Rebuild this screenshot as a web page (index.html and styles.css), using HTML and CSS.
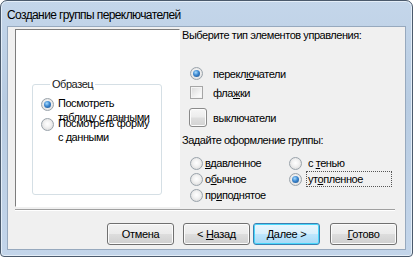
FILE: index.html
```html
<!DOCTYPE html>
<html lang="ru">
<head>
<meta charset="utf-8">
<title>Создание группы переключателей</title>
<link rel="stylesheet" href="styles.css">
</head>
<body>
<div class="window">
  <div class="titlebar">Создание группы переключателей</div>
  <div class="client">
    <div class="main">
      <div class="preview">
        <fieldset class="sample">
          <legend>Образец</legend>
          <div class="opt-multi"><span class="radio checked"></span><span class="ml">Посмотреть<br>таблицу с данными</span></div>
          <div class="opt-multi"><span class="radio"></span><span class="ml">Посмотреть форму<br>с данными</span></div>
        </fieldset>
      </div>
      <div class="options">
        <div class="heading">Выберите тип элементов управления:</div>
        <div class="type-row r1"><span class="radio checked"></span><span class="tlabel">перекл<u>ю</u>чатели</span></div>
        <div class="type-row r2"><span class="check"></span><span class="tlabel">фла<u>ж</u>ки</span></div>
        <div class="type-row r3"><span class="toggle"></span><span class="tlabel t3">выключатели</span></div>
        <div class="heading h2">Задайте оформление группы:</div>
        <div class="style-grid">
          <div class="srow"><span class="radio"></span><span class="slabel"><u>в</u>давленное</span></div>
          <div class="srow col2"><span class="radio"></span><span class="slabel box">с <u>т</u>енью</span></div>
          <div class="srow"><span class="radio"></span><span class="slabel">о<u>б</u>ычное</span></div>
          <div class="srow col2"><span class="radio checked"></span><span class="slabel box focus">ут<u>о</u>пленное</span></div>
          <div class="srow"><span class="radio"></span><span class="slabel">пр<u>и</u>поднятое</span></div>
        </div>
      </div>
    </div>
    <div class="separator"></div>
    <div class="buttons">
      <button class="btn b-cancel">Отмена</button>
      <button class="btn b-back">&lt; <u>Н</u>азад</button>
      <button class="btn b-next default"><u>Д</u>алее &gt;</button>
      <button class="btn b-done"><u>Г</u>отово</button>
    </div>
  </div>
</div>
</body>
</html>
```
FILE: styles.css
```css
html, body {
  margin: 0;
  padding: 0;
  background: #ffffff;
}
body {
  width: 413px;
  height: 257px;
  overflow: hidden;
  font-family: "Liberation Sans", Arial, sans-serif;
  font-size: 11px;
  letter-spacing: -0.45px;
  color: #000;
}
.window {
  box-sizing: border-box;
  width: 413px;
  height: 257px;
  border: 1px solid #4b5a6c;
  border-radius: 7px 7px 4px 4px;
  padding: 0 6px 6px 6px;
  background: linear-gradient(180deg, #c4d6ea 0%, #b8cce2 40%, #c3d5ea 100%);
  box-shadow: inset 0 0 0 1px #e4eef8;
}
.titlebar {
  height: 25px;
  line-height: 29px;
  font-family: "Liberation Sans", Arial, sans-serif;
  font-size: 12px;
  letter-spacing: -0.6px;
  color: #000;
  white-space: nowrap;
}
.client {
  box-sizing: border-box;
  width: 399px;
  height: 224px;
  border: 1px solid #97a9be;
  background: #f0f0f0;
}
.main {
  display: flex;
  padding: 2px 0 0 7px;
  height: 180px;
  box-sizing: border-box;
}
.preview {
  box-sizing: border-box;
  width: 165px;
  height: 178px;
  background: #ffffff;
  border-top: 1px solid #7d7d7d;
  border-left: 1px solid #7d7d7d;
  border-right: 1px solid #ffffff;
  border-bottom: 1px solid #ffffff;
  padding: 47px 0 0 16px;
}
.sample {
  box-sizing: border-box;
  width: 130px;
  height: 118px;
  margin: 0;
  padding: 5px 0 0 8px;
  border: 1px solid #d5dfe5;
  border-radius: 3px;
}
.sample legend {
  margin-left: 9px;
  padding: 0 2px;
  line-height: 14px;
  color: #1a1a1a;
}
.opt-multi {
  display: flex;
  align-items: flex-start;
  height: 20px;
}
.opt-multi .radio {
  margin-top: 2px;
}
.ml {
  margin-left: 4px;
  line-height: 14px;
  white-space: nowrap;
}
.radio {
  position: relative;
  flex: none;
  box-sizing: border-box;
  width: 13px;
  height: 13px;
  border-radius: 50%;
  border: 1px solid #9aa3ab;
  background: radial-gradient(circle at 50% 45%, #ffffff 0%, #f2f2f2 40%, #d2d2d2 100%);
}
.radio.checked::after {
  content: "";
  position: absolute;
  left: 2px;
  top: 2px;
  width: 7px;
  height: 7px;
  border-radius: 50%;
  background: radial-gradient(circle at 40% 35%, #a6dcff 0%, #3b86cf 45%, #1a4a82 100%);
}
.options {
  margin-left: 2px;
  flex: 1;
}
.heading {
  line-height: 13px;
  height: 13px;
  white-space: nowrap;
}
.type-row {
  display: flex;
  align-items: center;
  height: 19px;
  padding-left: 8px;
}
.r1 {
  margin-top: 22px;
}
.r3 {
  margin-top: 6px;
}
.tlabel {
  margin-left: 10px;
  white-space: nowrap;
}
.t3 {
  margin-left: 6px;
}
.check {
  flex: none;
  box-sizing: border-box;
  width: 13px;
  height: 13px;
  border: 1px solid #a6a6a6;
  background: linear-gradient(135deg, #d9d9d9 0%, #f6f6f6 70%, #ffffff 100%);
  box-shadow: inset 0 0 0 1px #f4f4f4;
}
.toggle {
  flex: none;
  box-sizing: border-box;
  width: 18px;
  height: 19px;
  margin-left: -1px;
  border: 1px solid #8a8a8a;
  border-radius: 3px;
  background: linear-gradient(180deg, #f6f6f6 0%, #ececec 48%, #dedede 52%, #d2d2d2 100%);
  box-shadow: inset 0 0 0 1px #fcfcfc;
}
.h2 {
  margin-top: 7px;
}
.style-grid {
  display: grid;
  grid-template-columns: 99px auto;
  grid-auto-rows: 16px;
  margin-top: 8px;
  padding-left: 8px;
}
.srow {
  display: flex;
  align-items: center;
  white-space: nowrap;
}
.slabel {
  margin-left: 2px;
}
.slabel.box {
  box-sizing: border-box;
  margin-left: 4px;
  height: 16px;
  line-height: 14px;
  padding: 0 1px;
  border: 1px dotted transparent;
}
.slabel.focus {
  width: 86px;
  border-color: #555;
}
.separator {
  margin: 2px 0 0 7px;
  width: 380px;
  border-top: 1px solid #a0a0a0;
  border-bottom: 1px solid #ffffff;
}
.buttons {
  display: flex;
  margin-top: 12px;
  padding-left: 99px;
}
.btn {
  box-sizing: border-box;
  width: 67px;
  height: 22px;
  padding: 0;
  font-family: "Liberation Sans", Arial, sans-serif;
  font-size: 11px;
  letter-spacing: -0.3px;
  color: #000;
  border: 1px solid #707070;
  border-radius: 3px;
  background: linear-gradient(180deg, #f2f2f2 0%, #ebebeb 48%, #dddddd 52%, #cfcfcf 100%);
  box-shadow: inset 0 0 0 1px #fbfbfb;
}
.b-cancel {
  margin-right: 9px;
}
.b-back {
  margin-right: 3px;
}
.b-next {
  margin-right: 10px;
}
.btn.default {
  border-color: #3c7fb1;
  box-shadow: inset 0 0 0 1px #48d7fb;
  background: linear-gradient(180deg, #eaf6fd 0%, #d9f0fc 48%, #bee6fd 52%, #a7d9f5 100%);
}
```
